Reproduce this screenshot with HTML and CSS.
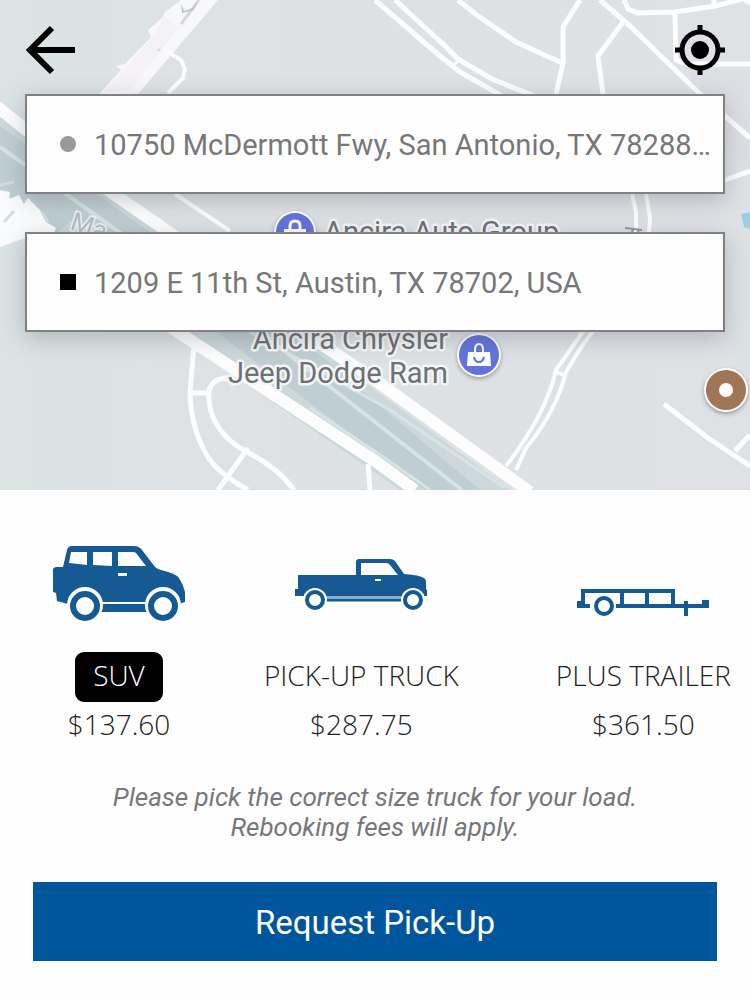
FILE: index.html
```html
<!DOCTYPE html>
<html lang="en">
<head>
<meta charset="utf-8">
<meta name="viewport" content="width=device-width, initial-scale=1">
<title>Request Pick-Up</title>
<link rel="stylesheet" href="styles.css">
</head>
<body>
<main class="screen">
  <section class="map">
    <svg class="map-art" viewBox="0 0 750 490" preserveAspectRatio="xMidYMid slice" aria-hidden="true">
      <defs>
        <linearGradient id="land" x1="0" y1="0" x2="1" y2="0">
          <stop offset="0" stop-color="#dbe3e3"/>
          <stop offset=".25" stop-color="#dee2e4"/>
          <stop offset="1" stop-color="#dfe1e5"/>
        </linearGradient>
      </defs>
      <rect width="750" height="490" fill="url(#land)"/>
      <path d="M690 62h60v110l-60-60z" fill="#dedfe4"/>
      <path d="M750 60v180h-25V330l25 60z" fill="#dae3e2" opacity=".6"/>
      <path d="M741 214l9-2v17l-6-2z" fill="#9bcfe4"/>

      <!-- highway -->
      <path d="M0 112L125 205 305 338 510 490H400L180 338 0 190z" fill="#ccd8da"/>
      <path d="M0 126L150 232 320 355 480 490H425L240 350 90 235 0 168z" fill="#bfced2"/>
      <path d="M0 190V165L70 221 55 235z" fill="#bfced2"/>
      <g fill="none" stroke="#d7e3e5">
        <path d="M0 147L105 222 260 332 375 422 462 490" stroke-width="4"/>
        <path d="M250 332L390 410 505 488" stroke-width="3"/>
        <path d="M310 408L385 458 430 490" stroke-width="3"/>
      </g>
      <g fill="none" stroke="#fdfdfe" stroke-width="12">
        <path d="M-4 106L35 137 115 195 170 233 305 333 375 380 530 492"/>
        <path d="M0 205L80 264 178 332 375 461 415 490"/>
      </g>
      <path d="M175 194L230 231" stroke="#fcfdfd" stroke-width="4"/>
      <path d="M0 190l10 2-1 7 10-4 5 9 4-6 12 12 6 12 10 6-4 10H25L0 247z" fill="#fafbfc"/>
      <path d="M4 222l10-11M42 212l6 10M0 185l14-3" stroke="#d5dde2" stroke-width="3"/>

      <!-- frontage buildings -->
      <path d="M181 0h37L138 94H99l22-24-5-4 9-2 26-27-3-7 14-12 3-6z" fill="#f8f8fa"/>
      <path d="M165 16l13 12-48 62-26 2 18-20 28-32z" fill="#f4f2f5"/>
      <path d="M199 0L181 24" stroke="#d4d9de" stroke-width="3"/>
      <path d="M181 3l3 8 9-3 5-8-4 10-12 3z" fill="#bdc5cc"/>
      <path d="M157 50l4-3-2 5z" fill="#d4d9de"/>

      <!-- streets -->
      <g fill="none" stroke="#fcfdfe" stroke-width="5" stroke-linejoin="round">
        <path d="M171 54l10 6 4 9-2 9-15 15" stroke-width="4"/>
        <path d="M375 0L440 56l20 16 42 24"/>
        <path d="M395 0l49 45 14 14 34 20 42 17"/>
        <path d="M453 66l8-8" stroke-width="3"/>
        <path d="M458 0l20 16 38 26 46 21"/>
        <path d="M580 0l-17 27v36l-7 31"/>
        <path d="M600 0l30 26 70 68 50 44"/>
        <path d="M623 22l-25 34 5 38"/>
        <path d="M624 0l4 9 9 4 38-1 40-6 35-9M675 12l1 48 10 4h64M714 0v5"/>
        <path d="M745 0l5 3M725 180l25-9"/>
        <path d="M632 194l4 18v30q-4 30-52 88L556 370q-10 44-50 96" stroke-width="4"/>
        <path d="M646 194l4 24q0 50-54 110-10 10-30 44-10 40-40 76l-10 22M554 371l12 5" stroke-width="4"/>
        <path d="M664 404l44 34 42 28M735 451l15-16"/>
        <path d="M194 345l-4 47q1 40 20 68 10 14 38 30M191 393h18M229 378q-18 0-20 14-2 32 28 54l24 14q20 12 33 30M248 448l-30 42M368 464l2 26"/>
      </g>

      <!-- places -->
      <g class="pin">
        <circle cx="295" cy="232" r="21" fill="#fff"/>
        <circle cx="295" cy="232" r="19" fill="#6473dc"/>
        <path d="M290 229v-3q0-5 5-5t5 5v3" fill="none" stroke="#fff" stroke-width="3"/>
        <path d="M284 229h22v13h-22z" fill="#fff"/>
      </g>
      <g class="pin">
        <circle cx="479" cy="355" r="22" fill="#fff"/>
        <circle cx="479" cy="355" r="20" fill="#6473dc"/>
        <path d="M475 354v-4q0-6 4-6t4 6v4" fill="none" stroke="#fff" stroke-width="2"/>
        <path d="M468 352h22l1 14h-24z" fill="#fff"/>
        <path d="M474 357q1 5 5 5t5-5" fill="none" stroke="#6473dc" stroke-width="2"/>
      </g>
      <g class="pin">
        <circle cx="726" cy="390" r="22" fill="#fff"/>
        <circle cx="726" cy="390" r="20" fill="#a17558"/>
        <circle cx="726" cy="390" r="7" fill="#fff"/>
      </g>
      <text class="place" x="324" y="242">Ancira Auto Group</text>
      <text class="place" x="448" y="349" text-anchor="end">Ancira Chrysler</text>
      <text class="place" x="448" y="383" text-anchor="end">Jeep Dodge Ram</text>
      <text class="road" transform="translate(69 229) rotate(18)">Ma</text>
      <path d="M625 228l17 2M633 229l-2 6M639 229l-2 6" stroke="#92979c" stroke-width="2"/>
    </svg>

    <header class="bar">
      <button class="icon-button" type="button" aria-label="Back">
        <svg viewBox="0 0 50 50"><path d="M50 25H6M27 3L5 25l22 22" fill="none" stroke="#000" stroke-width="6"/></svg>
      </button>
      <button class="icon-button" type="button" aria-label="Use my location">
        <svg viewBox="0 0 50 50">
          <circle cx="25" cy="25" r="18" fill="none" stroke="#000" stroke-width="5"/>
          <circle cx="25" cy="25" r="9"/>
          <path d="M25 0v7M25 43v7M0 25h7M43 25h7" stroke="#000" stroke-width="5"/>
        </svg>
      </button>
    </header>

    <form class="route">
      <label class="stop">
        <span class="marker marker-start"></span>
        <input class="stop-input" type="text" aria-label="Pick-up address" value="10750 McDermott Fwy, San Antonio, TX 78288…">
      </label>
      <label class="stop">
        <span class="marker"></span>
        <input class="stop-input" type="text" aria-label="Drop-off address" value="1209 E 11th St, Austin, TX 78702, USA">
      </label>
    </form>
  </section>

  <section class="booking">
    <div class="vehicles" role="radiogroup" aria-label="Vehicle">
      <label class="vehicle">
        <input class="vehicle-radio" type="radio" name="vehicle" checked>
        <svg class="vehicle-art" viewBox="0 0 134 78" aria-hidden="true">
          <path fill="#155a93" fill-rule="evenodd" d="M20 2h62q5 0 8 4l13 17q2 2 6 3 14 3 18 8 4 6 6 14v10l-6 2v8H16v-8l-11-3-1-8-3-1V26q0-3 4-3h6l4-17q1-4 5-4zM19 8l-2 11 18 2V8zM41 8v13l19 1V8zM66 8v14h28L84 9q-1-1-3-1z"/>
          <path d="M45 59h55" stroke="#fff" stroke-width="2"/>
          <rect x="66" y="29" width="9" height="3" fill="#fff"/>
          <path d="M10 60h16v8H10zM120 61h14v8h-14z" fill="#fff"/>
          <g fill="#fff"><circle cx="33" cy="61" r="18"/><circle cx="111" cy="61" r="18"/></g>
          <g fill="#fff" stroke="#155a93" stroke-width="6"><circle cx="33" cy="62" r="12"/><circle cx="111" cy="62" r="12"/></g>
        </svg>
        <span class="vehicle-name">SUV</span>
        <span class="vehicle-price">$137.60</span>
      </label>
      <label class="vehicle">
        <input class="vehicle-radio" type="radio" name="vehicle">
        <svg class="vehicle-art" viewBox="0 0 134 78" aria-hidden="true">
          <path fill="#155a93" fill-rule="evenodd" d="M4 31h58V18q0-3 3-3h31q3 0 5 2l9 13q16 1 20 4 2 1 2 5v6l1 1v6h-5q-3-7-9-7-9 0-12 9H32q-2-9-11-9-8 0-10 7H1v-7h3zM67 19v12h37l-8-10q-1-2-4-2z"/>
          <path d="M32 53h75" stroke="#8fb1cf" stroke-width="2"/>
          <path d="M31 56h77" stroke="#155a93" stroke-width="3"/>
          <rect x="81" y="35" width="6" height="2" fill="#fff"/>
          <g fill="#fff"><circle cx="21" cy="56" r="12"/><circle cx="119" cy="56" r="12"/></g>
          <g fill="#fff" stroke="#155a93" stroke-width="4"><circle cx="21" cy="56" r="8"/><circle cx="119" cy="56" r="8"/></g>
        </svg>
        <span class="vehicle-name">PICK-UP TRUCK</span>
        <span class="vehicle-price">$287.75</span>
      </label>
      <label class="vehicle">
        <input class="vehicle-radio" type="radio" name="vehicle">
        <svg class="vehicle-art" viewBox="0 0 134 78" aria-hidden="true">
          <g fill="none" stroke="#155a93" stroke-width="4">
            <path d="M7 58V47h90v15M46 47v15M71 47v15M1 62h13M40 62h92M110 57v15"/>
            <circle cx="28" cy="62" r="8"/>
          </g>
          <path d="M1 57h8v7H1zM126 56h7v8h-7z" fill="#155a93"/>
        </svg>
        <span class="vehicle-name">PLUS TRAILER</span>
        <span class="vehicle-price">$361.50</span>
      </label>
    </div>
    <p class="note">Please pick the correct size truck for your load.<br>Rebooking fees will apply.</p>
    <button class="request" type="button">Request Pick-Up</button>
  </section>
</main>
</body>
</html>
```
FILE: styles.css
```css
* { box-sizing: border-box; }

body {
  margin: 0;
  background: #fefefe;
  font-family: Roboto, "Liberation Sans", sans-serif;
  color: #222;
}

.map {
  position: relative;
  overflow: hidden;
  padding: 25px 25px 158px;
}

.map-art {
  position: absolute;
  inset: 0;
  width: 100%;
  height: 100%;
}

.pin { filter: drop-shadow(0 2px 2px rgba(0, 0, 0, .3)); }

.place {
  font-size: 29px;
  fill: #6e7074;
  stroke: #f4f5f7;
  stroke-width: 5px;
  stroke-linejoin: round;
  paint-order: stroke;
}

.road {
  font-size: 26px;
  fill: #b4bfc5;
  stroke: #f2f5f7;
  stroke-width: 3px;
  paint-order: stroke;
}

.bar {
  position: relative;
  display: flex;
  justify-content: space-between;
}

.icon-button {
  width: 50px;
  height: 50px;
  padding: 0;
  border: 0;
  background: none;
}

.icon-button svg { display: block; }

.route {
  position: relative;
  display: grid;
  gap: 38px;
  margin-top: 19px;
}

.stop {
  display: flex;
  align-items: center;
  gap: 18px;
  height: 100px;
  padding: 0 8px 0 33px;
  border: 2px solid #808183;
  background: #fefefe;
  box-shadow: 0 6px 22px rgba(60, 70, 80, .28);
}

.marker {
  flex: none;
  width: 16px;
  height: 16px;
  background: #000;
}

.marker-start {
  border-radius: 50%;
  background: #9c989c;
}

.stop-input {
  flex: 1;
  min-width: 0;
  padding: 2px 0 0;
  border: 0;
  background: none;
  color: #77777a;
  font: 29px Roboto, "Liberation Sans", sans-serif;
  text-overflow: ellipsis;
}

.vehicles {
  display: grid;
  grid-template-columns: 132fr 352fr 214fr;
  padding: 54px 0 0 52px;
}

.vehicle {
  position: relative;
  display: flex;
  flex-direction: column;
  align-items: center;
  font-family: "Open Sans", "Noto Sans", sans-serif;
  font-weight: 300;
  font-size: 28px;
  white-space: nowrap;
}

.vehicle-radio {
  position: absolute;
  opacity: 0;
}

.vehicle-art {
  width: 134px;
  height: 78px;
  margin-bottom: 30px;
}

.vehicle-name {
  padding: 0 18px 4px;
  border-radius: 9px;
  line-height: 46px;
}

.vehicle-radio:checked ~ .vehicle-name {
  background: #000;
  color: #fff;
}

.vehicle-price { line-height: 44px; }

.note {
  margin: 0;
  padding: 36px 24px 40px;
  color: #77777a;
  font-size: 26px;
  font-style: italic;
  line-height: 30px;
  text-align: center;
}

.request {
  display: block;
  width: calc(100% - 66px);
  height: 79px;
  margin: 0 auto 39px;
  padding: 2px 0 0;
  border: 0;
  background: #00569d;
  color: #fff;
  font: 33px Roboto, "Liberation Sans", sans-serif;
}
```
